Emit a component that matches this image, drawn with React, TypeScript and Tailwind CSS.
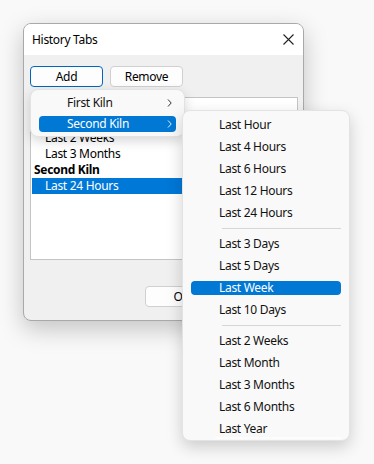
const first = ["Last 6 Hours", "Last 2 Weeks", "Last 3 Months"];

const groups = [
  ["Last Hour", "Last 4 Hours", "Last 6 Hours", "Last 12 Hours", "Last 24 Hours"],
  ["Last 3 Days", "Last 5 Days", "Last Week", "Last 10 Days"],
  ["Last 2 Weeks", "Last Month", "Last 3 Months", "Last 6 Months", "Last Year"],
];

function Chevron({ color }: { color: string }) {
  return (
    <svg width="5" height="8" viewBox="0 0 5 8">
      <path d="M1 0.5 L4.2 4 L1 7.5" fill="none" stroke={color} strokeWidth="1" />
    </svg>
  );
}

function Button({ label, focused }: { label: string; focused?: boolean }) {
  return (
    <div
      className={
        "flex h-[21px] w-[73px] items-center justify-center rounded-[4px] border bg-[#fdfdfd] text-[12px] leading-[14px] text-black " +
        (focused ? "border-[#0067c0]" : "border-[#d0d0d0]")
      }
    >
      {label}
    </div>
  );
}

export default function App() {
  return (
    <div
      className="relative h-[464px] w-[374px] overflow-hidden bg-[#f9f9f9] tracking-[-0.3px]"
      style={{ fontFamily: '"Segoe UI", "Noto Sans", sans-serif' }}
    >
      {/* dialog */}
      <div className="ml-[23px] mt-[23px] flex h-[298px] w-[281px] flex-col overflow-hidden rounded-[8px] border border-[#a9a9a9] bg-[#f0f0f0] shadow-[0_8px_24px_rgba(0,0,0,0.22)]">
        <div className="flex h-[31px] shrink-0 items-center justify-between bg-white pl-[8px] pr-[9px]">
          <span className="text-[12px] text-black">History Tabs</span>
          <svg width="11" height="11" viewBox="0 0 11 11">
            <path d="M0.5 0.5 L10.5 10.5 M10.5 0.5 L0.5 10.5" stroke="#222" strokeWidth="1.1" />
          </svg>
        </div>
        <div className="flex flex-1 flex-col px-[6px] pt-[11px]">
          <div className="flex gap-[7px]">
            <Button label="Add" focused />
            <Button label="Remove" />
          </div>
          <div className="mt-[10px] h-[163px] w-[268px] border border-[#c4c4c4] bg-white text-[12px] leading-[16px] text-black">
            <div className="pl-[3px] font-bold">First Kiln</div>
            {first.map((t) => (
              <div key={t} className="pl-[14px]">
                {t}
              </div>
            ))}
            <div className="pl-[3px] font-bold">Second Kiln</div>
            <div className="mx-[1px] bg-[#0078d7] pl-[13px] text-white">Last 24 Hours</div>
          </div>
          <div className="mt-[26px] flex justify-end gap-[6px]">
            <Button label="OK" />
            <Button label="Cancel" />
          </div>
        </div>
      </div>

      {/* context menu */}
      <div className="absolute left-[30px] top-[89px] flex h-[48px] w-[155px] flex-col justify-center rounded-[8px] border border-[#e3e3e3] bg-[#f9f9f9] px-[8px] text-[12px] leading-[16px] text-[#111] shadow-[0_4px_12px_rgba(0,0,0,0.16)]">
        <div className="flex h-[18px] items-center justify-between pl-[28px] pr-[4px]">
          <span>First Kiln</span>
          <Chevron color="#333" />
        </div>
        <div className="mt-[4px] flex h-[16px] items-center justify-between rounded-[4px] bg-[#0078d4] pl-[28px] pr-[4px] text-white">
          <span>Second Kiln</span>
          <Chevron color="#e8f0ff" />
        </div>
      </div>

      {/* submenu */}
      <div className="absolute left-[182px] top-[110px] flex h-[331px] w-[168px] flex-col rounded-[8px] border border-[#e3e3e3] bg-[#f9f9f9] px-[8px] pt-[3px] text-[12px] leading-[14px] text-[#111] shadow-[0_6px_16px_rgba(0,0,0,0.18)]">
        {groups.map((g, gi) => (
          <div key={gi}>
            {gi > 0 && <div className="my-[4px] ml-[31px] h-px bg-[#d6d6d6]" />}
            {g.map((t) =>
              t === "Last Week" ? (
                <div key={t} className="flex h-[22px] items-center">
                  <div className="flex h-[14px] w-full items-center rounded-[4px] bg-[#0078d4] pl-[28px] text-white">
                    {t}
                  </div>
                </div>
              ) : (
                <div key={t} className="flex h-[22px] items-center pl-[28px]">
                  {t}
                </div>
              )
            )}
          </div>
        ))}
        <div className="ml-[24px] mt-[-3px] h-[2px] bg-[#fdfdfd]" />
      </div>
    </div>
  );
}
